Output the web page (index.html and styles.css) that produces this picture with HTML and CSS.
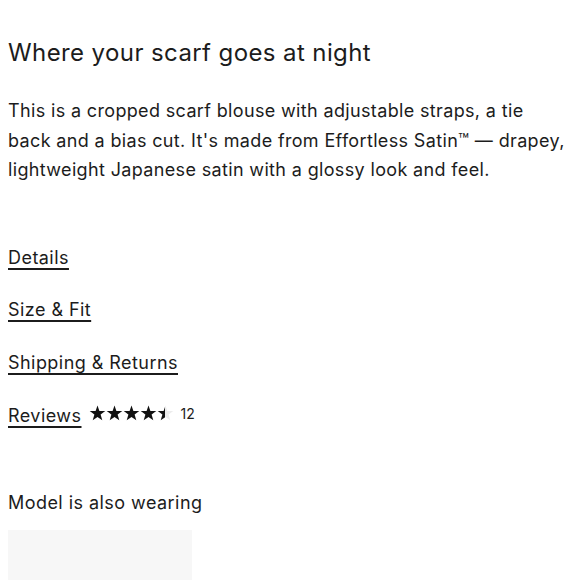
FILE: index.html
```html
<!DOCTYPE html>
<html>
<head>
<meta charset="utf-8">
<link rel="stylesheet" href="styles.css">
</head>
<body>
<main class="page">
  <h1 class="title">Where your scarf goes at night</h1>
  <p class="desc">This is a cropped scarf blouse with adjustable straps, a tie back and a bias cut. It's made from Effortless Satin™ — drapey, lightweight Japanese satin with a glossy look and feel.</p>
  <ul class="links">
    <li><a class="link" href="#">Details</a></li>
    <li><a class="link" href="#">Size &amp; Fit</a></li>
    <li><a class="link" href="#">Shipping &amp; Returns</a></li>
    <li class="reviews"><a class="link" href="#">Reviews</a>
      <span class="stars">
        <svg viewBox="0 0 84 16" width="85" height="16">
          <defs>
            <path id="s" d="M8 0.4 L9.9 5.9 L15.8 6 L11.1 9.6 L12.8 15.3 L8 11.9 L3.2 15.3 L4.9 9.6 L0.2 6 L6.1 5.9 Z"/>
            <linearGradient id="half" x1="0" x2="1" y1="0" y2="0">
              <stop offset="50%" stop-color="#111"/>
              <stop offset="50%" stop-color="#ececec"/>
            </linearGradient>
          </defs>
          <use href="#s" x="0" fill="#111"/>
          <use href="#s" x="17" fill="#111"/>
          <use href="#s" x="34" fill="#111"/>
          <use href="#s" x="51" fill="#111"/>
          <use href="#s" x="68" fill="url(#half)"/>
        </svg>
      </span>
      <span class="count">12</span>
    </li>
  </ul>
  <h2 class="sub">Model is also wearing</h2>
  <div class="thumb"></div>
</main>
</body>
</html>
```
FILE: styles.css
```css
html, body {
  margin: 0;
  padding: 0;
  background: #fff;
}
body {
  font-family: Inter, "Liberation Sans", sans-serif;
  color: #1c1c1c;
}
.page {
  padding: 0 8px;
}
.title {
  margin: 0;
  padding-top: 38px;
  font-size: 24px;
  font-weight: 400;
  letter-spacing: 0.4px;
  line-height: 30px;
}
.desc {
  margin: 28px 0 0;
  max-width: 561px;
  font-size: 18px;
  letter-spacing: 0.35px;
  line-height: 29.5px;
}
.links {
  list-style: none;
  margin: 58px 0 0;
  padding: 0;
  display: flex;
  flex-direction: column;
  gap: 23.7px;
}
.links li {
  height: 29px;
  display: flex;
  align-items: center;
}
.link {
  color: #1c1c1c;
  font-size: 18px;
  letter-spacing: 0.45px;
  text-decoration: underline;
  text-underline-offset: 4px;
  text-decoration-thickness: 1.5px;
}
.stars {
  display: inline-flex;
  margin-left: 7px;
  margin-top: -4px;
}
.count {
  font-size: 14px;
  margin-left: 7px;
  margin-top: -4px;
}
.sub {
  margin: 60px 0 0;
  font-size: 18px;
  letter-spacing: 0.45px;
  font-weight: 400;
  line-height: 26px;
}
.thumb {
  margin-top: 14px;
  width: 184px;
  height: 60px;
  background: #f7f7f7;
}
```
